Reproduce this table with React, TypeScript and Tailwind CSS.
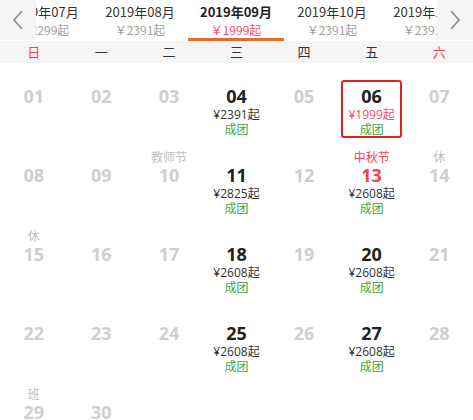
import React from "react";

type Day = {
  n: string;
  active?: boolean;
  price?: string;
  label?: string;
  labelRed?: boolean;
  red?: boolean;
  selected?: boolean;
};

const rows: (Day | null)[][] = [
  [
    { n: "01" },
    { n: "02" },
    { n: "03" },
    { n: "04", active: true, price: "¥2391起" },
    { n: "05" },
    { n: "06", active: true, price: "¥1999起", selected: true },
    { n: "07" },
  ],
  [
    { n: "08" },
    { n: "09" },
    { n: "10", label: "教师节" },
    { n: "11", active: true, price: "¥2825起" },
    { n: "12" },
    { n: "13", active: true, price: "¥2608起", label: "中秋节", labelRed: true, red: true },
    { n: "14", label: "休" },
  ],
  [
    { n: "15", label: "休" },
    { n: "16" },
    { n: "17" },
    { n: "18", active: true, price: "¥2608起" },
    { n: "19" },
    { n: "20", active: true, price: "¥2608起" },
    { n: "21" },
  ],
  [
    { n: "22" },
    { n: "23" },
    { n: "24" },
    { n: "25", active: true, price: "¥2608起" },
    { n: "26" },
    { n: "27", active: true, price: "¥2608起" },
    { n: "28" },
  ],
  [{ n: "29", label: "班" }, { n: "30" }, null, null, null, null, null],
];

const months = [
  { m: "2019年07月", p: "￥2299起" },
  { m: "2019年08月", p: "￥2391起" },
  { m: "2019年09月", p: "￥1999起", cur: true },
  { m: "2019年10月", p: "￥2391起" },
  { m: "2019年11月", p: "￥2391起" },
];

const weekdays = ["日", "一", "二", "三", "四", "五", "六"];

function Chevron({ dir }: { dir: "l" | "r" }) {
  return (
    <svg width="12" height="20" viewBox="0 0 12 20" fill="none">
      <path
        d={dir === "l" ? "M10 1 L2 10 L10 19" : "M2 1 L10 10 L2 19"}
        stroke="#8a8a8a"
        strokeWidth="1.6"
      />
    </svg>
  );
}

function Cell({ d }: { d: Day | null }) {
  if (!d) return <div className="h-[79px]" />;
  return (
    <div className="relative h-[79px] pt-[8px] flex flex-col items-center">
      {d.selected && (
        <div className="absolute left-[3px] right-[3px] top-[17px] h-[58px] border-2 border-[#e5211d] rounded-[3px]" />
      )}
      <div
        className={`h-[14px] leading-[14px] text-[12px] ${
          d.labelRed ? "text-[#f0434f]" : "text-[#bdbdbd]"
        }`}
      >
        {d.label ?? ""}
      </div>
      <div
        className={`h-[22px] leading-[22px] text-[18px] font-bold ${
          d.red ? "text-[#f0434f]" : d.active ? "text-[#222]" : "text-[#cfcfcf]"
        }`}
        style={{ fontFamily: '"Open Sans", "Noto Sans CJK SC", sans-serif' }}
      >
        {d.n}
      </div>
      {d.active && (
        <>
          <div
            className={`h-[15px] leading-[15px] text-[12px] ${
              d.selected ? "text-[#f0506e]" : "text-[#333]"
            }`}
            style={{ fontFamily: '"Open Sans", "Noto Sans CJK SC", sans-serif' }}
          >
            {d.price}
          </div>
          <div className="h-[14px] leading-[14px] text-[12px] text-[#3ea83e]">成团</div>
        </>
      )}
    </div>
  );
}

export default function App() {
  return (
    <div
      className="w-[473px] h-[420px] overflow-hidden bg-white"
      style={{ fontFamily: '"Noto Sans CJK SC", "Noto Sans", sans-serif' }}
    >
      <div className="relative h-[41px] overflow-hidden bg-white">
        <div className="flex ml-[-4px] h-full">
          {months.map((mo) => (
            <div key={mo.m} className="relative w-[96px] shrink-0 flex flex-col items-center pt-[2px]">
              <div
                className={`h-[20px] leading-[20px] text-[13px] ${
                  mo.cur ? "font-bold text-[#222]" : "text-[#333]"
                }`}
              >
                {mo.m}
              </div>
              <div
                className={`h-[15px] leading-[15px] text-[12px] ${
                  mo.cur ? "text-[#f0506e]" : "text-[#a0a0a0]"
                }`}
              >
                {mo.p}
              </div>
              {mo.cur && <div className="absolute left-0 right-0 bottom-0 h-[3px] bg-[#ea6a2a]" />}
            </div>
          ))}
        </div>
        <div className="absolute left-0 top-0 w-[36px] h-[40px] bg-[#f5f5f5] flex items-center justify-center">
          <Chevron dir="l" />
        </div>
        <div className="absolute right-0 top-0 w-[36px] h-[40px] bg-[#f5f5f5] flex items-center justify-center">
          <Chevron dir="r" />
        </div>
      </div>
      <div className="grid grid-cols-7 h-[22px] bg-[#f5f5f5]">
        {weekdays.map((w, i) => (
          <div
            key={w}
            className={`text-center leading-[22px] text-[13px] ${
              i === 0 || i === 6 ? "text-[#f0434f]" : "text-[#333]"
            }`}
          >
            {w}
          </div>
        ))}
      </div>
      <div className="flex flex-col">
        {rows.map((r, ri) => (
          <div key={ri} className="grid grid-cols-7">
            {r.map((d, di) => (
              <Cell key={di} d={d} />
            ))}
          </div>
        ))}
      </div>
    </div>
  );
}
